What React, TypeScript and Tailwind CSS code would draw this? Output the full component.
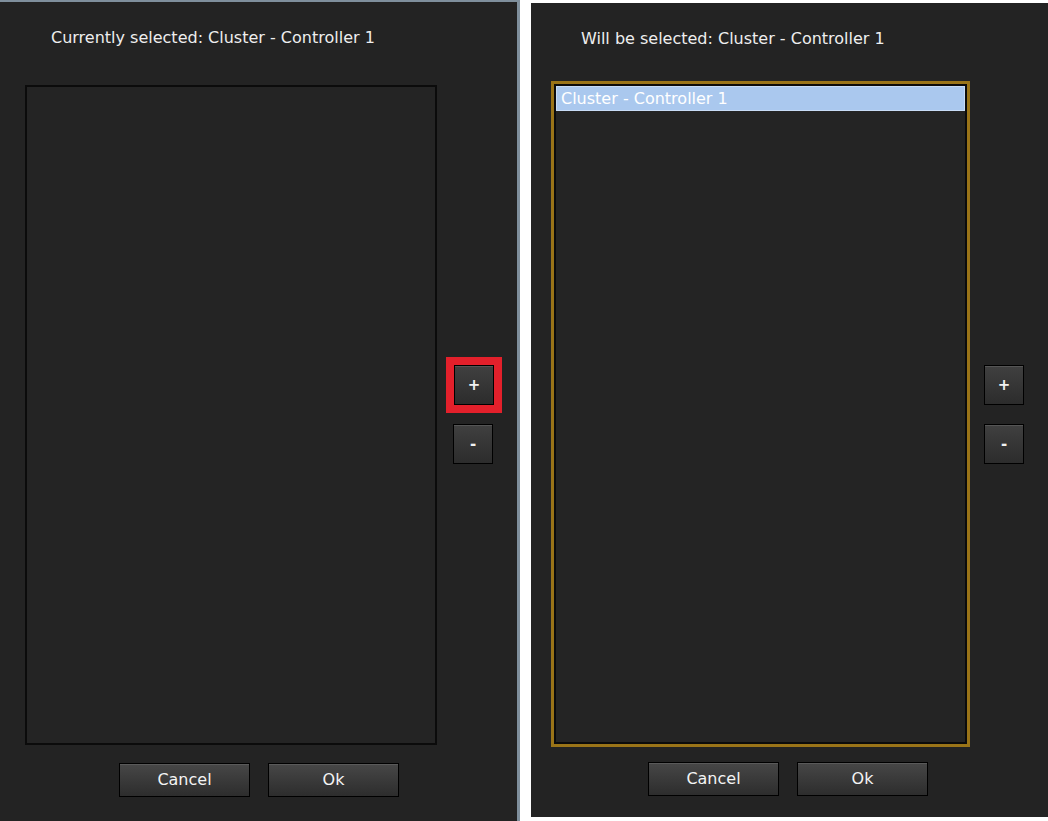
import React from 'react';

const font = { fontFamily: '"DejaVu Sans", "Liberation Sans", sans-serif' };

const SmallButton = ({ label }: { label: string }) => (
  <button className="w-[40px] h-[40px] border border-black bg-gradient-to-b from-[#404040] to-[#2c2c2c] text-[#f2f2f2] text-[15px] font-bold leading-none flex items-center justify-center shadow-[inset_0_1px_0_#555]">
    {label}
  </button>
);

const DialogButton = ({ label }: { label: string }) => (
  <button className="w-[131px] h-[34px] border border-black bg-gradient-to-b from-[#474747] to-[#2d2d2d] text-[#f4f4f4] text-[16px] flex items-center justify-center shadow-[inset_0_1px_0_#5a5a5a]">
    {label}
  </button>
);

export default function App() {
  return (
    <div className="w-[1048px] h-[821px] bg-white flex overflow-hidden" style={font}>
      {/* Left dialog: current selection */}
      <div className="w-[520px] h-[821px] shrink-0 bg-[#232323] border-t-2 border-r-[3px] border-[#7f8f9c] flex flex-col">
        <div className="pt-[26px] pl-[51px] h-[83px] text-[16px] leading-[20px] text-[#eeeeee]">
          Currently selected: Cluster - Controller 1
        </div>
        <div className="flex">
          <div className="ml-[25px] w-[412px] h-[660px] border-2 border-[#0b0b0b] bg-[#242424]" />
          <div className="ml-[9px] pt-[272px] flex flex-col items-center">
            <div className="border-[8px] border-[#e3202b]">
              <SmallButton label="+" />
            </div>
            <div className="mt-[11px] -ml-[2px]">
              <SmallButton label="-" />
            </div>
          </div>
        </div>
        <div className="mt-[18px] ml-[119px] flex gap-[18px]">
          <DialogButton label="Cancel" />
          <DialogButton label="Ok" />
        </div>
      </div>

      <div className="w-[11px] shrink-0" />

      {/* Right dialog: pending selection */}
      <div className="w-[517px] h-[814px] mt-[3px] shrink-0 bg-[#232323] flex flex-col">
        <div className="pt-[26px] pl-[50px] h-[78px] text-[16px] leading-[20px] text-[#eeeeee]">
          Will be selected: Cluster - Controller 1
        </div>
        <div className="flex">
          <div className="ml-[20px] w-[419px] h-[666px] border-[3px] border-[#9a7418]">
            <div className="w-full h-full border-2 border-[#0b0b0b] bg-[#242424]">
              <div className="h-[25px] bg-[#aac8ee] border border-[#c8dcf6] pl-[4px] text-[16px] leading-[23px] text-white">
                Cluster - Controller 1
              </div>
            </div>
          </div>
          <div className="ml-[14px] pt-[284px] flex flex-col gap-[19px]">
            <SmallButton label="+" />
            <SmallButton label="-" />
          </div>
        </div>
        <div className="mt-[15px] ml-[117px] flex gap-[18px]">
          <DialogButton label="Cancel" />
          <DialogButton label="Ok" />
        </div>
      </div>
    </div>
  );
}
